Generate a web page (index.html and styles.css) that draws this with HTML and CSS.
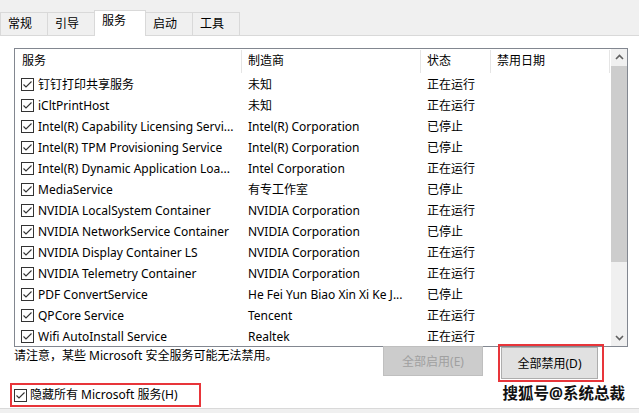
FILE: index.html
```html
<!DOCTYPE html>
<html lang="zh-CN">

<head>
    <meta charset="UTF-8">
    <meta name="viewport" content="width=device-width, initial-scale=1.0">
    <title>系统配置 - 服务</title>
    <link rel="stylesheet" href="styles.css">
</head>

<body>
    <div class="tabs">
        <div class="tab">常规</div>
        <div class="tab">引导</div>
        <div class="tab active">服务</div>
        <div class="tab">启动</div>
        <div class="tab">工具</div>
    </div>

    <div class="panel">
        <div class="list">
            <div class="list-body">
                <div class="row head">
                    <div class="cell">服务</div>
                    <div class="cell">制造商</div>
                    <div class="cell">状态</div>
                    <div class="cell">禁用日期</div>
                </div>

                <div class="row"><div class="cell name"><svg class="check" viewBox="0 0 13 13"><rect x="0.5" y="0.5" width="12" height="12"/><polyline points="2.5,6.5 5,9 10.5,3.5"/></svg>钉钉打印共享服务</div><div class="cell">未知</div><div class="cell">正在运行</div><div class="cell"></div></div>
                <div class="row"><div class="cell name"><svg class="check" viewBox="0 0 13 13"><rect x="0.5" y="0.5" width="12" height="12"/><polyline points="2.5,6.5 5,9 10.5,3.5"/></svg>iCltPrintHost</div><div class="cell">未知</div><div class="cell">正在运行</div><div class="cell"></div></div>
                <div class="row"><div class="cell name"><svg class="check" viewBox="0 0 13 13"><rect x="0.5" y="0.5" width="12" height="12"/><polyline points="2.5,6.5 5,9 10.5,3.5"/></svg>Intel(R) Capability Licensing Servi...</div><div class="cell">Intel(R) Corporation</div><div class="cell">已停止</div><div class="cell"></div></div>
                <div class="row"><div class="cell name"><svg class="check" viewBox="0 0 13 13"><rect x="0.5" y="0.5" width="12" height="12"/><polyline points="2.5,6.5 5,9 10.5,3.5"/></svg>Intel(R) TPM Provisioning Service</div><div class="cell">Intel(R) Corporation</div><div class="cell">已停止</div><div class="cell"></div></div>
                <div class="row"><div class="cell name"><svg class="check" viewBox="0 0 13 13"><rect x="0.5" y="0.5" width="12" height="12"/><polyline points="2.5,6.5 5,9 10.5,3.5"/></svg>Intel(R) Dynamic Application Loa...</div><div class="cell">Intel Corporation</div><div class="cell">正在运行</div><div class="cell"></div></div>
                <div class="row"><div class="cell name"><svg class="check" viewBox="0 0 13 13"><rect x="0.5" y="0.5" width="12" height="12"/><polyline points="2.5,6.5 5,9 10.5,3.5"/></svg>MediaService</div><div class="cell">有专工作室</div><div class="cell">已停止</div><div class="cell"></div></div>
                <div class="row"><div class="cell name"><svg class="check" viewBox="0 0 13 13"><rect x="0.5" y="0.5" width="12" height="12"/><polyline points="2.5,6.5 5,9 10.5,3.5"/></svg>NVIDIA LocalSystem Container</div><div class="cell">NVIDIA Corporation</div><div class="cell">正在运行</div><div class="cell"></div></div>
                <div class="row"><div class="cell name"><svg class="check" viewBox="0 0 13 13"><rect x="0.5" y="0.5" width="12" height="12"/><polyline points="2.5,6.5 5,9 10.5,3.5"/></svg>NVIDIA NetworkService Container</div><div class="cell">NVIDIA Corporation</div><div class="cell">已停止</div><div class="cell"></div></div>
                <div class="row"><div class="cell name"><svg class="check" viewBox="0 0 13 13"><rect x="0.5" y="0.5" width="12" height="12"/><polyline points="2.5,6.5 5,9 10.5,3.5"/></svg>NVIDIA Display Container LS</div><div class="cell">NVIDIA Corporation</div><div class="cell">正在运行</div><div class="cell"></div></div>
                <div class="row"><div class="cell name"><svg class="check" viewBox="0 0 13 13"><rect x="0.5" y="0.5" width="12" height="12"/><polyline points="2.5,6.5 5,9 10.5,3.5"/></svg>NVIDIA Telemetry Container</div><div class="cell">NVIDIA Corporation</div><div class="cell">正在运行</div><div class="cell"></div></div>
                <div class="row"><div class="cell name"><svg class="check" viewBox="0 0 13 13"><rect x="0.5" y="0.5" width="12" height="12"/><polyline points="2.5,6.5 5,9 10.5,3.5"/></svg>PDF ConvertService</div><div class="cell">He Fei Yun Biao Xin Xi Ke J...</div><div class="cell">已停止</div><div class="cell"></div></div>
                <div class="row"><div class="cell name"><svg class="check" viewBox="0 0 13 13"><rect x="0.5" y="0.5" width="12" height="12"/><polyline points="2.5,6.5 5,9 10.5,3.5"/></svg>QPCore Service</div><div class="cell">Tencent</div><div class="cell">正在运行</div><div class="cell"></div></div>
                <div class="row"><div class="cell name"><svg class="check" viewBox="0 0 13 13"><rect x="0.5" y="0.5" width="12" height="12"/><polyline points="2.5,6.5 5,9 10.5,3.5"/></svg>Wifi AutoInstall Service</div><div class="cell">Realtek</div><div class="cell">正在运行</div><div class="cell"></div></div>
            </div>

            <div class="scrollbar">
                <div class="arrow"><svg viewBox="0 0 17 17"><polyline points="5,10 8.5,6.5 12,10"/></svg></div>
                <div class="thumb"></div>
                <div class="track"></div>
                <div class="arrow"><svg viewBox="0 0 17 17"><polyline points="5,7 8.5,10.5 12,7"/></svg></div>
            </div>
        </div>

        <div class="actions">
            <div class="note">请注意，某些 Microsoft 安全服务可能无法禁用。</div>
            <button class="btn disabled">全部启用(E)</button>
            <div class="mark">
                <button class="btn">全部禁用(D)</button>
            </div>
        </div>

        <div class="bottom">
            <label class="hide-ms mark">
                <svg class="check" viewBox="0 0 13 13"><rect x="0.5" y="0.5" width="12" height="12"/><polyline points="2.5,6.5 5,9 10.5,3.5"/></svg>隐藏所有 Microsoft 服务(H)
            </label>
            <div class="watermark">搜狐号@系统总裁</div>
        </div>
    </div>
</body>

</html>
```

FILE: styles.css
```css
body {
    margin: 0;
    background: #f0f0f0;
    font-family: "Noto Sans", "Noto Sans CJK SC", sans-serif;
    font-size: 12px;
    color: #000;
}

.tabs {
    display: flex;
    align-items: flex-end;
    height: 35px;
    border-bottom: 1px solid #d9d9d9;
}

.tab {
    width: 39px;
    height: 22px;
    line-height: 22px;
    padding-left: 7px;
    margin-right: -1px;
    border: 1px solid #d9d9d9;
    border-bottom: none;
    background: #f0f0f0;
}

.tab.active {
    position: relative;
    width: 43px;
    height: 25px;
    line-height: 20px;
    margin-bottom: -1px;
    background: #fff;
    z-index: 1;
}

.panel {
    background: #fff;
    height: 360px;
    padding: 12px 11px 0 14px;
    border-bottom: 1px solid #d9d9d9;
}

.list {
    display: flex;
    height: 297px;
    border: 1px solid #828790;
    overflow: hidden;
}

.list-body {
    width: 595px;
}

.row {
    display: grid;
    grid-template-columns: 227px 179px 70px 119px;
    height: 21px;
    line-height: 21px;
}

.row.head {
    height: 25px;
    line-height: 24px;
}

.head .cell {
    border-right: 1px solid #e5e5e5;
    margin: 1px 0;
    line-height: 22px;
}

.cell {
    padding-left: 6px;
    white-space: nowrap;
    overflow: hidden;
}

.head .cell:first-child {
    padding-left: 7px;
}

.name {
    display: flex;
    align-items: center;
    gap: 4px;
}

.check {
    width: 13px;
    height: 13px;
    flex: none;
}

.check rect {
    fill: #fff;
    stroke: #333;
}

.check polyline {
    fill: none;
    stroke: #333;
    stroke-width: 1.1;
}

.scrollbar {
    width: 17px;
    margin-left: 1px;
    display: flex;
    flex-direction: column;
    background: #f0f0f0;
}

.arrow {
    height: 17px;
}

.arrow svg {
    width: 17px;
    height: 17px;
    display: block;
}

.arrow polyline {
    fill: none;
    stroke: #606060;
    stroke-width: 1.6;
}

.thumb {
    height: 196px;
    background: #cdcdcd;
}

.track {
    flex: 1;
}

.actions {
    display: flex;
    align-items: flex-start;
    height: 34px;
}

.note {
    line-height: 18px;
    margin-right: auto;
}

.btn {
    font: inherit;
    font-size: 12px;
    height: 30px;
    border: 1px solid #adadad;
    background: #e1e1e1;
    color: #000;
    padding: 0;
}

.btn.disabled {
    width: 100px;
    margin-top: -1px;
    background: #cccccc;
    border-color: #bfbfbf;
    color: #a0a0a0;
}

.mark {
    border: 2px solid #e8353a;
}

.actions .mark {
    margin: -3px 24px 0 15px;
    padding: 1px 4px 1px 1px;
}

.actions .mark .btn {
    width: 97px;
    height: 32px;
}

.bottom {
    display: flex;
    align-items: center;
}

.hide-ms {
    display: flex;
    align-items: center;
    gap: 3px;
    margin-left: -4px;
    width: 185px;
    height: 20px;
    padding: 0 0 0 2px;
    line-height: 20px;
}

.watermark {
    margin-left: auto;
    margin-right: 3px;
    margin-bottom: 5px;
    font-size: 15.5px;
    font-weight: bold;
    color: #111;
    text-shadow: 1px 0 #fff, -1px 0 #fff, 0 1px #fff, 0 -1px #fff;
}
```
